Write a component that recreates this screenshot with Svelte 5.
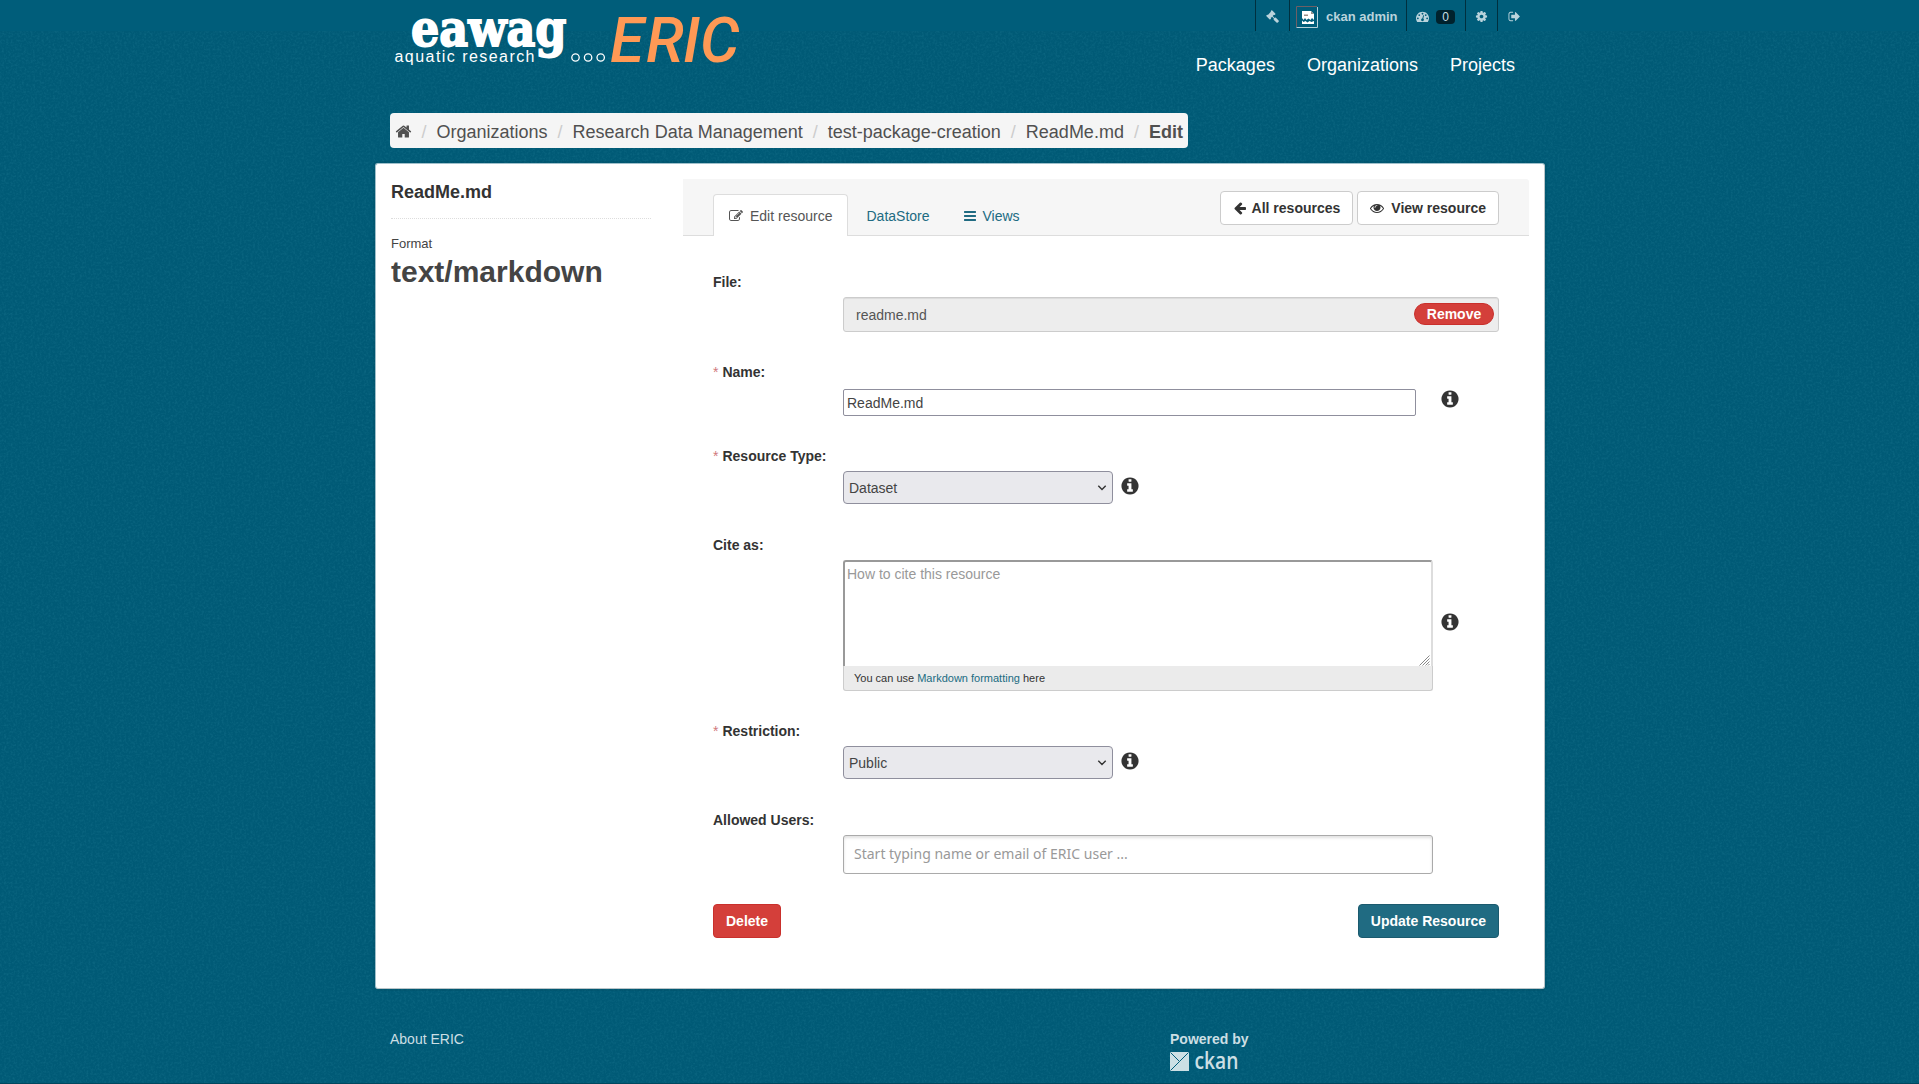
<script>
  const icons = {
    home: 'M1472 992v480q0 26-19 45t-45 19h-384v-384h-256v384h-384q-26 0-45-19t-19-45v-480q0-1 .5-3t.5-3l575-474 575 474q1 2 1 6zm223-69l-62 74q-8 9-21 11h-3q-13 0-21-7l-692-577-692 577q-12 8-24 7-13-2-21-11l-62-74q-8-10-7-23.5t11-21.5l719-599q32-26 76-26t76 26l244 204v-195q0-14 9-23t23-9h192q14 0 23 9t9 23v408l219 182q10 8 11 21.5t-7 23.5z',
    gavel: 'M1771 1536q0 53-37 90l-107 108q-39 37-91 37-53 0-90-37l-363-364q-38-36-38-90 0-53 43-96l-256-256-126 126q-14 14-34 14t-34-14q2 2 12.5 12t12.5 13 10 11.5 10 13.5 6 13.5 5.5 16.5 1.5 18q0 38-28 68-3 3-16.5 18t-19 20.5-18.5 16.5-22 15.5-22 9-26 4.5q-40 0-68-28l-408-408q-28-28-28-68 0-13 4.5-26t9-22 15.5-22 16.5-18.5 20.5-19 18-16.5q30-28 68-28 10 0 18 1.5t16.5 5.5 13.5 6 13.5 10 11.5 10 13 12.5 12 12.5q-14-14-14-34t14-34l348-348q14-14 34-14t34 14q-2-2-12.5-12t-12.5-13-10-11.5-10-13.5-6-13.5-5.5-16.5-1.5-18q0-38 28-68 3-3 16.5-18t19-20.5 18.5-16.5 22-15.5 22-9 26-4.5q40 0 68 28l408 408q28 28 28 68 0 13-4.5 26t-9 22-15.5 22-16.5 18.5-20.5 19-18 16.5q-30 28-68 28-10 0-18-1.5t-16.5-5.5-13.5-6-13.5-10-11.5-10-13-12.5-12-12.5q14 14 14 34t-14 34l-126 126 256 256q43-43 96-43 52 0 91 37l363 363q37 39 37 91z',
    cog: 'M1152 896q0-106-75-181t-181-75-181 75-75 181 75 181 181 75 181-75 75-181zm512-109v222q0 12-8 23t-20 13l-185 28q-19 54-39 91 35 50 107 138 10 12 10 25t-9 23q-27 37-99 108t-94 71q-12 0-26-9l-138-108q-44 23-91 38-16 136-29 186-7 28-36 28h-222q-14 0-24.5-8.5t-11.5-21.5l-28-184q-49-16-90-37l-141 107q-10 9-25 9-14 0-25-11-126-114-165-168-7-10-7-23 0-12 8-23 15-21 51-66.5t54-70.5q-27-50-41-99l-183-27q-13-2-21-12.5t-8-23.5v-222q0-12 8-23t19-13l186-28q14-46 39-92-40-57-107-138-10-12-10-24 0-10 9-23 26-36 98.5-107.5t94.5-71.5q13 0 26 10l138 107q44-23 91-38 16-136 29-186 7-28 36-28h222q14 0 24.5 8.5t11.5 21.5l28 184q49 16 90 37l142-107q9-9 24-9 13 0 25 10 129 119 165 170 7 8 7 22 0 12-8 23-15 21-51 66.5t-54 70.5q26 50 41 98l183 28q13 2 21 12.5t8 23.5z',
    signout: 'M704 1440q0 4 1 20t.5 26.5-3 23.5-10 19.5-20.5 6.5h-320q-119 0-203.5-84.5t-84.5-203.5v-704q0-119 84.5-203.5t203.5-84.5h320q13 0 22.5 9.5t9.5 22.5q0 4 1 20t.5 26.5-3 23.5-10 19.5-20.5 6.5h-320q-66 0-113 47t-47 113v704q0 66 47 113t113 47h312l11.5 1 11.5 3 8 5.5 7 9 2 13.5zm928-544q0 26-19 45l-544 544q-19 19-45 19t-45-19-19-45v-288h-448q-26 0-45-19t-19-45v-384q0-26 19-45t45-19h448v-288q0-26 19-45t45-19 45 19l544 544q19 19 19 45z',
    dashboard: 'M384 1152q0-53-37.5-90.5t-90.5-37.5-90.5 37.5-37.5 90.5 37.5 90.5 90.5 37.5 90.5-37.5 37.5-90.5zm192-448q0-53-37.5-90.5t-90.5-37.5-90.5 37.5-37.5 90.5 37.5 90.5 90.5 37.5 90.5-37.5 37.5-90.5zm428 481l101-382q6-26-7.5-48.5t-38.5-29.5-48 6.5-30 39.5l-101 382q-60 5-107 43.5t-63 98.5q-20 77 20 146t117 89 146-20 89-117q16-60-6-117t-72-91zm660-33q0-53-37.5-90.5t-90.5-37.5-90.5 37.5-37.5 90.5 37.5 90.5 90.5 37.5 90.5-37.5 37.5-90.5zm-640-640q0-53-37.5-90.5t-90.5-37.5-90.5 37.5-37.5 90.5 37.5 90.5 90.5 37.5 90.5-37.5 37.5-90.5zm448 192q0-53-37.5-90.5t-90.5-37.5-90.5 37.5-37.5 90.5 37.5 90.5 90.5 37.5 90.5-37.5 37.5-90.5zm320 448q0 261-141 483-19 29-54 29h-1402q-35 0-54-29-141-221-141-483 0-182 71-348t191-286 286-191 348-71 348 71 286 191 191 286 71 348z',
    edit: 'M888 1184l116-116-152-152-116 116v56h96v96h56zm440-720q-16-16-33 1l-350 350q-17 17-1 33t33-1l350-350q17-17 1-33zm80 594v190q0 119-84.5 203.5t-203.5 84.5h-832q-119 0-203.5-84.5t-84.5-203.5v-832q0-119 84.5-203.5t203.5-84.5h832q63 0 117 25 15 7 18 23 3 17-9 29l-49 49q-14 14-32 8-23-6-45-6h-832q-66 0-113 47t-47 113v832q0 66 47 113t113 47h832q66 0 113-47t47-113v-126q0-13 9-22l64-64q15-15 35-7t20 29zm-96-738l288 288-672 672h-288v-288zm444 132l-92 92-288-288 92-92q28-28 68-28t68 28l152 152q28 28 28 68t-28 68z',
    bars: 'M1664 1344v128q0 26-19 45t-45 19h-1408q-26 0-45-19t-19-45v-128q0-26 19-45t45-19h1408q26 0 45 19t19 45zm0-512v128q0 26-19 45t-45 19h-1408q-26 0-45-19t-19-45v-128q0-26 19-45t45-19h1408q26 0 45 19t19 45zm0-512v128q0 26-19 45t-45 19h-1408q-26 0-45-19t-19-45v-128q0-26 19-45t45-19h1408q26 0 45 19t19 45z',
    left: 'M1664 896v128q0 53-32.5 90.5t-84.5 37.5h-704l293 294q38 36 38 90t-38 90l-75 76q-37 37-90 37-52 0-91-37l-651-652q-37-37-37-90 0-52 37-91l651-650q38-38 91-38 52 0 90 38l75 74q38 38 38 91t-38 91l-293 293h704q52 0 84.5 37.5t32.5 90.5z',
    eye: 'M1664 960q-152-236-381-353 61 104 61 225 0 185-131.5 316.5t-316.5 131.5-316.5-131.5-131.5-316.5q0-121 61-225-229 117-381 353 133 205 333.5 326.5t434.5 121.5 434.5-121.5 333.5-326.5zm-720-384q0-20-14-34t-34-14q-125 0-214.5 89.5t-89.5 214.5q0 20 14 34t34 14 34-14 14-34q0-86 61-147t147-61q20 0 34-14t14-34zm848 384q0 34-20 69-140 230-376.5 368.5t-499.5 138.5-499.5-139-376.5-368q-20-35-20-69t20-69q140-229 376.5-368t499.5-139 499.5 139 376.5 368q20 35 20 69z',
    info: 'M1152 1376v-160q0-14-9-23t-23-9h-96v-512q0-14-9-23t-23-9h-320q-14 0-23 9t-9 23v160q0 14 9 23t23 9h96v320h-96q-14 0-23 9t-9 23v160q0 14 9 23t23 9h448q14 0 23-9t9-23zm-128-896v-160q0-14-9-23t-23-9h-192q-14 0-23 9t-9 23v160q0 14 9 23t23 9h192q14 0 23-9t9-23zm640 416q0 209-103 385.5t-279.5 279.5-385.5 103-385.5-103-279.5-279.5-103-385.5 103-385.5 279.5-279.5 385.5-103 385.5 103 279.5 279.5 103 385.5z'
  };
  const crumbs = ['Organizations', 'Research Data Management', 'test-package-creation', 'ReadMe.md'];
</script>

{#snippet icon(name, cls = '')}
  <svg class="icon {cls}" viewBox="0 0 1792 1792" aria-hidden="true"><path d={icons[name]} /></svg>
{/snippet}

{#snippet label(text, required = false)}
  <div class="label">{#if required}<span class="star">*</span>{/if}{text}</div>
{/snippet}

{#snippet select(value)}
  <div class="select">
    <span>{value}</span>
    <svg width="10" height="7" viewBox="0 0 10 7"><path d="M1.3 1.7 5 5.500l3.700-3.800" /></svg>
  </div>
{/snippet}

<div class="page">
  <svg class="texture" aria-hidden="true">
    <filter id="grain" x="0" y="0" width="100%" height="100%" color-interpolation-filters="sRGB">
      <feTurbulence type="fractalNoise" baseFrequency="0.45" numOctaves="2" seed="4" />
      <feColorMatrix values="0 0 0 0 0.1  0 0 0 0 0.46  0 0 0 0 0.56  0.9 0 0 0 -0.38" />
    </filter>
    <rect width="100%" height="100%" filter="url(#grain)" />
  </svg>

  <div class="account">
    <div class="container account-in">
      <div class="acc gavel">{@render icon('gavel')}</div>
      <div class="acc user">
        <svg class="avatar" width="22" height="22" viewBox="0 0 22 22">
          <path d="M.5 21V.5H21" fill="none" stroke="#6d5f65" />
          <path d="M.5 21.500h21V1" fill="none" stroke="#b5d0d9" />
          <path d="M6 5h9l3 3v6l-2-2-1.500 2-2-1.500-2 1.500-1.500-2-1.500 2L6 12z" fill="#fff" />
          <path d="M6 14.500l1.500 1.500 2-1 2 1.500 2-1.500 2 1 2.500-1V18H6z" fill="#fff" />
          <path d="M8 8.500h4v1.500H8zM15 5v3h3z" fill="#9b8f8a" />
        </svg>
        <b>ckan admin</b>
      </div>
      <div class="acc dash">{@render icon('dashboard')}<span class="badge">0</span></div>
      <div class="acc cog">{@render icon('cog')}</div>
      <div class="acc out">{@render icon('signout')}</div>
    </div>
  </div>

  <header class="container masthead">
    <svg class="logo" width="350" height="83" viewBox="0 0 350 83">
      <text class="slab" x="21" y="45.500" textLength="155.500" lengthAdjust="spacingAndGlyphs">eawag</text>
      <text class="tag" x="4.500" y="61.500" textLength="140">aquatic research</text>
      <g fill="none" stroke="#fff" stroke-width="1.300">
        <circle cx="185.500" cy="57.500" r="3.700" />
        <circle cx="198.100" cy="57.500" r="3.700" />
        <circle cx="210.700" cy="57.500" r="3.700" />
      </g>
      <text class="eric" x="220 256 293 310" y="62">ERIC</text>
    </svg>
    <nav><span>Packages</span><span>Organizations</span><span>Projects</span></nav>
  </header>

  <div class="container crumb-row">
    <div class="crumbs">
      {@render icon('home', 'home')}
      {#each crumbs as c}
        <i>/</i><span>{c}</span>
      {/each}
      <i>/</i><b>Edit</b>
    </div>
  </div>

  <main>
    <aside>
      <h2>ReadMe.md</h2>
      <div class="fmt">Format</div>
      <div class="mime">text/markdown</div>
    </aside>
    <section>
      <div class="head">
        <div class="tab active">{@render icon('edit')}<span>Edit resource</span></div>
        <div class="tab">DataStore</div>
        <div class="tab views">{@render icon('bars')}<span>Views</span></div>
        <div class="actions">
          <button class="btn">{@render icon('left')}All resources</button>
          <button class="btn view">{@render icon('eye')}View resource</button>
        </div>
      </div>

      <form>
        <div class="field file">
          {@render label('File:')}
          <div class="control"><div class="upload"><span>readme.md</span><button type="button" class="remove">Remove</button></div></div>
        </div>
        <div class="field name">
          {@render label('Name:', true)}
          <div class="control"><div class="text">ReadMe.md</div>{@render icon('info', 'info')}</div>
        </div>
        <div class="field type">
          {@render label('Resource Type:', true)}
          <div class="control">{@render select('Dataset')}{@render icon('info', 'info')}</div>
        </div>
        <div class="field cite">
          {@render label('Cite as:')}
          <div class="control">
            <div class="editor">
              <div class="area">
                <span>How to cite this resource</span>
                <svg class="grip" width="11" height="11" viewBox="0 0 11 11"><path d="M.5 10.500l10-10M3.500 10.500l7-7M6.500 10.500l4-4M9 10.500l1.500-1.500" /></svg>
              </div>
              <div class="note">You can use <a href="#md">Markdown formatting</a> here</div>
            </div>
            {@render icon('info', 'info')}
          </div>
        </div>
        <div class="field type">
          {@render label('Restriction:', true)}
          <div class="control">{@render select('Public')}{@render icon('info', 'info')}</div>
        </div>
        <div class="field users">
          {@render label('Allowed Users:')}
          <div class="control"><div class="tokens">Start typing name or email of ERIC user ...</div></div>
        </div>
        <div class="buttons">
          <button type="button" class="btn danger">Delete</button>
          <button type="button" class="btn primary">Update Resource</button>
        </div>
      </form>
    </section>
  </main>

  <footer class="container">
    <div class="about">About ERIC</div>
    <div class="powered">
      <b>Powered by</b>
      <svg width="70" height="22" viewBox="0 0 70 22">
        <path d="M0 1h19v19H0z" fill="#ccdfe4" />
        <path d="M.5 1.500l9 9L18.500 1.500M9.500 10.500L.5 19.500" fill="none" stroke="#005d7a" />
        <text x="24.500" y="18" textLength="44" lengthAdjust="spacingAndGlyphs">ckan</text>
      </svg>
    </div>
  </footer>
</div>

<style>
  :global(body) { margin: 0; background: #005d7a; }
  .page {
    position: relative; box-sizing: border-box; height: 1084px; overflow: hidden;
    background: #005a76; border-bottom: 1px solid #00485f; padding-left: 1px;
    font: 14px/20px "Liberation Sans", Arial, sans-serif; color: #444;
  }
  .texture { position: absolute; inset: 0; width: 100%; height: 100%; }
  .page > :not(.texture) { position: relative; }
  .container { width: 1140px; margin: 0 auto; padding-right: 1px; box-sizing: border-box; }
  .icon { width: 14px; height: 14px; fill: currentColor; flex: none; }

  .account { background: #005d7a; height: 31px; color: #b9d3dc; margin-left: -1px; padding-left: 1px; }
  .account-in { display: flex; justify-content: flex-end; height: 31px; }
  .acc { display: flex; align-items: center; box-sizing: border-box; height: 31px; border-left: 1px solid #00303f; font-size: 13px; padding: 2px 10px 0; }
  .acc .icon { width: 13px; height: 13px; }
  .gavel { width: 34px; }
  .user { width: 117px; padding: 3px 0 0 6px; gap: 8px; }
  .dash { width: 59px; padding: 2px 0 0 9px; gap: 7px; }
  .cog { width: 32px; padding-left: 9px; }
  .out { width: 32px; padding-left: 10px; }
  .badge { background: #00222d; color: #c9dde4; border-radius: 4px; width: 19px; height: 14px; line-height: 14px; font-size: 12px; text-align: center; margin-top: 1px; }

  .masthead { height: 82px; display: flex; justify-content: space-between; }
  .logo { margin-top: -31px; }
  .slab { font: bold 50px "DejaVu Serif", serif; fill: #fff; stroke: #fff; stroke-width: 1.800px; }
  .tag { font-size: 16px; fill: #fff; }
  .eric { font: italic 500 62px Roboto, sans-serif; fill: #ff9955; }
  nav { display: flex; gap: 32px; font-size: 18px; color: #fff; padding: 24px 14px 0 0; }

  .crumb-row { height: 50px; }
  .crumbs { display: inline-flex; align-items: center; height: 35px; box-sizing: border-box; background: #f5f5f5; border-radius: 4px; padding: 2px 5px 0; font-size: 18px; color: #505050; }
  .crumbs i { font-style: normal; color: #ccc; margin: 0 10px; }
  .home { width: 17px; height: 17px; margin: 0 -.5px 1px 0; }

  main { width: 1170px; height: 826px; margin: 0 auto; box-sizing: border-box; background: #fff; border: 1px solid #ccc; border-color: #9fc0cb #b9c4c8 #b9c4c8 #9fc0cb; border-radius: 3px; box-shadow: 0 0 0 2px rgba(0,0,0,.05); display: flex; }
  aside { width: 292px; padding: 16px 30px 0 15px; box-sizing: border-box; margin-right: 16px; flex: none; }
  h2 { font-size: 18px; line-height: 24px; margin: 0 0 16px; padding-bottom: 14px; color: #333; border-bottom: 1px dotted #ddd; width: 260px; }
  .fmt { font-size: 13px; line-height: 18px; }
  .mime { font-size: 30px; line-height: 36px; font-weight: bold; margin-top: 1px; }
  section { flex: none; width: 846px; padding-top: 15px; margin-left: -1px; }
  .head { height: 57px; box-sizing: border-box; background: #f6f6f6; border-bottom: 1px solid #ddd; display: flex; padding: 15px 30px 0; border-radius: 0 3px 0 0; }
  .tab { height: 42px; box-sizing: border-box; display: flex; align-items: center; padding: 2px 15px 0 18px; gap: 7px; color: #206b82; }
  .tab.active { background: #fff; color: #555; border: 1px solid #ddd; border-bottom: 0; padding: 1px 15px 0 15px; border-radius: 4px 4px 0 0; }
  .views { gap: 6px; }
  .actions { margin: -3px 0 0 auto; display: flex; gap: 4px; }
  .btn { display: flex; align-items: center; height: 34px; box-sizing: border-box; padding: 0 12px; border: 1px solid #ccc; border-radius: 4px; background: #fff; color: #333; font: bold 14px/20px "Liberation Sans", Arial, sans-serif; }
  .btn .icon { margin-right: 4.500px; }
  .btn.view .icon { margin-right: 7px; }

  form { padding: 36px 30px 0; }
  .field { display: flex; flex-direction: column; gap: 5px; }
  .file { height: 90px; }
  .name { height: 84px; gap: 7px; }
  .type { height: 89px; }
  .cite { height: 186px; }
  .users { height: 94px; }
  .label { height: 20px; font-weight: bold; color: #333; }
  .star { font-weight: normal; color: #d0797c; margin-right: 4px; }
  .control { margin-left: 130px; display: flex; }
  .upload { flex: 1; height: 35px; box-sizing: border-box; display: flex; justify-content: space-between; align-items: center; border: 1px solid #ccc; border-radius: 3px; background: #ededed; box-shadow: inset 0 1px 1px rgba(0,0,0,.075); padding: 0 4px 0 12px; color: #555; }
  .remove { background: #d43f3a; color: #fff; border: 1px solid #c9302c; border-radius: 11px; height: 22px; width: 80px; padding: 0; font: bold 14px/18px "Liberation Sans", Arial, sans-serif; margin-top: -1px; }
  .text { width: 573px; height: 27px; box-sizing: border-box; border: 1px solid #8f8f9d; border-radius: 2px; padding: 3px; line-height: 20px; }
  .info { width: 20px; height: 20px; color: #333; margin-left: 6.700px; }
  .name .info { margin-left: 23.700px; }
  .type .info { margin-top: 5px; }
  .cite .info { margin-top: 52px; }
  .select { width: 270px; height: 33px; box-sizing: border-box; border: 1px solid #8f8f9d; border-radius: 4px; background: #e9e9ed; display: flex; align-items: center; justify-content: space-between; padding: 0 5px; }
  .select path { fill: none; stroke: #333; stroke-width: 1.400; }
  .editor { width: 590px; height: 131px; }
  .area { height: 106px; box-sizing: border-box; border: 2px solid #999; border-right-color: #ddd; border-bottom: 0; border-radius: 3px 3px 0 0; padding: 2px 2px 0; color: #999; display: flex; justify-content: space-between; }
  .grip { align-self: flex-end; margin-right: -1px; }
  .grip path { stroke: #888; stroke-width: 1; fill: none; }
  .note { height: 25px; box-sizing: border-box; background: #ebebeb; border: 1px solid #ccc; border-top: 0; border-radius: 0 0 3px 3px; padding: 2px 10px; font-size: 11px; color: #333; }
  .note a { color: #206b82; text-decoration: none; }
  .tokens { width: 590px; height: 39px; box-sizing: border-box; border: 1px solid #aaa; border-radius: 3px; padding: 8px 10px; color: #999; font-family: "Noto Sans", sans-serif; box-shadow: inset 0 2px 3px rgba(0,0,0,.12); }
  .buttons { display: flex; justify-content: space-between; }
  .danger { background: #d43f3a; border-color: #c9302c; color: #fff; }
  .primary { background: #206b82; border-color: #1b5a6e; color: #fff; padding: 0 12px; }

  footer { display: flex; color: #ccdfe4; padding-top: 40px; }
  .about { width: 780px; }
  .powered { display: flex; flex-direction: column; gap: 2px; }
  .powered svg { overflow: visible; }
  .powered text { font: 600 23px "Open Sans", sans-serif; fill: #ccdfe4; }
</style>
